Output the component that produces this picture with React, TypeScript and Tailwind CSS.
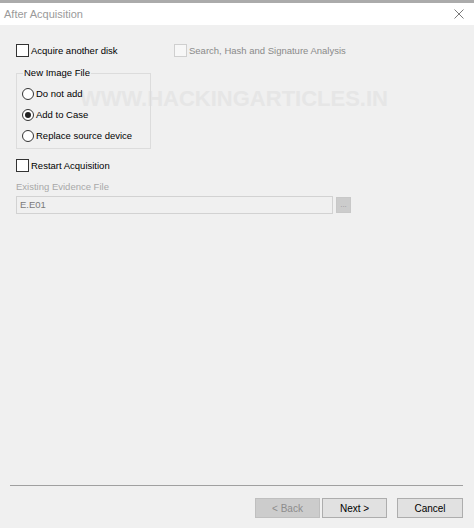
import React from 'react';

const FONT = "font-['Liberation_Sans',Arial,sans-serif]";

function CheckBox({ label, disabled = false }: { label: string; disabled?: boolean }) {
  return (
    <div className="flex h-[13px] items-center">
      <div
        className={
          disabled
            ? 'h-[13px] w-[13px] border border-[#cfcfcf] bg-[#f7f7f7]'
            : 'h-[13px] w-[13px] border border-[#333333] bg-white'
        }
      />
      <span className={`ml-[2px] text-[9.5px] leading-none ${disabled ? 'text-[#8a8a8a]' : 'text-black'}`}>
        {label}
      </span>
    </div>
  );
}

function Radio({ label, checked = false }: { label: string; checked?: boolean }) {
  return (
    <div className="flex h-[21px] items-center">
      <div className="flex h-[12px] w-[12px] items-center justify-center rounded-full border border-[#333333] bg-white">
        {checked && <div className="h-[6px] w-[6px] rounded-full bg-[#222222]" />}
      </div>
      <span className="ml-[2px] text-[9.5px] leading-none text-black">{label}</span>
    </div>
  );
}

export default function App() {
  return (
    <div className={`relative flex h-[528px] w-[474px] flex-col overflow-hidden bg-[#f0f0f0] ${FONT}`}>
      {/* window top edge */}
      <div className="h-[3px] bg-[#ababab]" />

      {/* title bar */}
      <div className="flex h-[22px] items-center justify-between bg-white pl-[4px] pr-[10px]">
        <span className="text-[11px] text-[#9a9a9a]">After Acquisition</span>
        <svg width="10" height="10" viewBox="0 0 10 10" className="text-[#7a7a7a]">
          <path d="M0.5 0.5 L9.5 9.5 M9.5 0.5 L0.5 9.5" stroke="currentColor" strokeWidth="1" />
        </svg>
      </div>

      {/* watermark */}
      <div className="pointer-events-none absolute left-[80px] top-[88px] select-none text-[22px] font-bold leading-none text-[#e6e6e6]">
        WWW.HACKINGARTICLES.IN
      </div>

      {/* content */}
      <div className="relative flex flex-col pl-[16px] pt-[19px]">
        <div className="flex">
          <div className="w-[158px]">
            <CheckBox label="Acquire another disk" />
          </div>
          <CheckBox label="Search, Hash and Signature Analysis" disabled />
        </div>

        {/* group box */}
        <div className="relative mt-[16px] h-[76px] w-[135px] border border-[#dcdcdc] pl-[5px] pt-[9px]">
          <span className="absolute left-[6px] top-[-7px] bg-[#f0f0f0] px-[1px] text-[9.5px] leading-[12px] text-black">
            New Image File
          </span>
          <Radio label="Do not add" />
          <Radio label="Add to Case" checked />
          <Radio label="Replace source device" />
        </div>

        <div className="mt-[10px]">
          <CheckBox label="Restart Acquisition" />
        </div>

        <div className="mt-[8px] h-[14px] text-[9.5px] leading-[14px] text-[#a8a8a8]">Existing Evidence File</div>

        <div className="mt-[2px] flex items-center">
          <div className="flex h-[18px] w-[317px] items-center border border-[#d2d2d2] bg-[#f0f0f0] pl-[3px] text-[9.5px] text-[#7a7a7a]">
            E.E01
          </div>
          <div className="ml-[3px] flex h-[16px] w-[15px] items-center justify-center border border-[#c8c8c8] bg-[#cccccc] text-[8px] leading-none text-[#9a9a9a]">
            ...
          </div>
        </div>
      </div>

      <div className="flex-1" />

      {/* separator */}
      <div className="ml-[10px] mr-[11px] h-[1px] bg-[#a0a0a0]" />

      {/* buttons */}
      <div className="mb-[10px] mt-[12px] flex justify-end pr-[11px]">
        <div className="flex h-[20px] w-[65px] items-center justify-center border border-[#bfbfbf] bg-[#cccccc] text-[10px] text-[#8c8c8c]">
          &lt; Back
        </div>
        <div className="ml-[2px] flex h-[20px] w-[65px] items-center justify-center border border-[#adadad] bg-[#e1e1e1] text-[10px] text-black">
          Next &gt;
        </div>
        <div className="ml-[10px] flex h-[20px] w-[66px] items-center justify-center border border-[#adadad] bg-[#e1e1e1] text-[10px] text-black">
          Cancel
        </div>
      </div>
    </div>
  );
}
